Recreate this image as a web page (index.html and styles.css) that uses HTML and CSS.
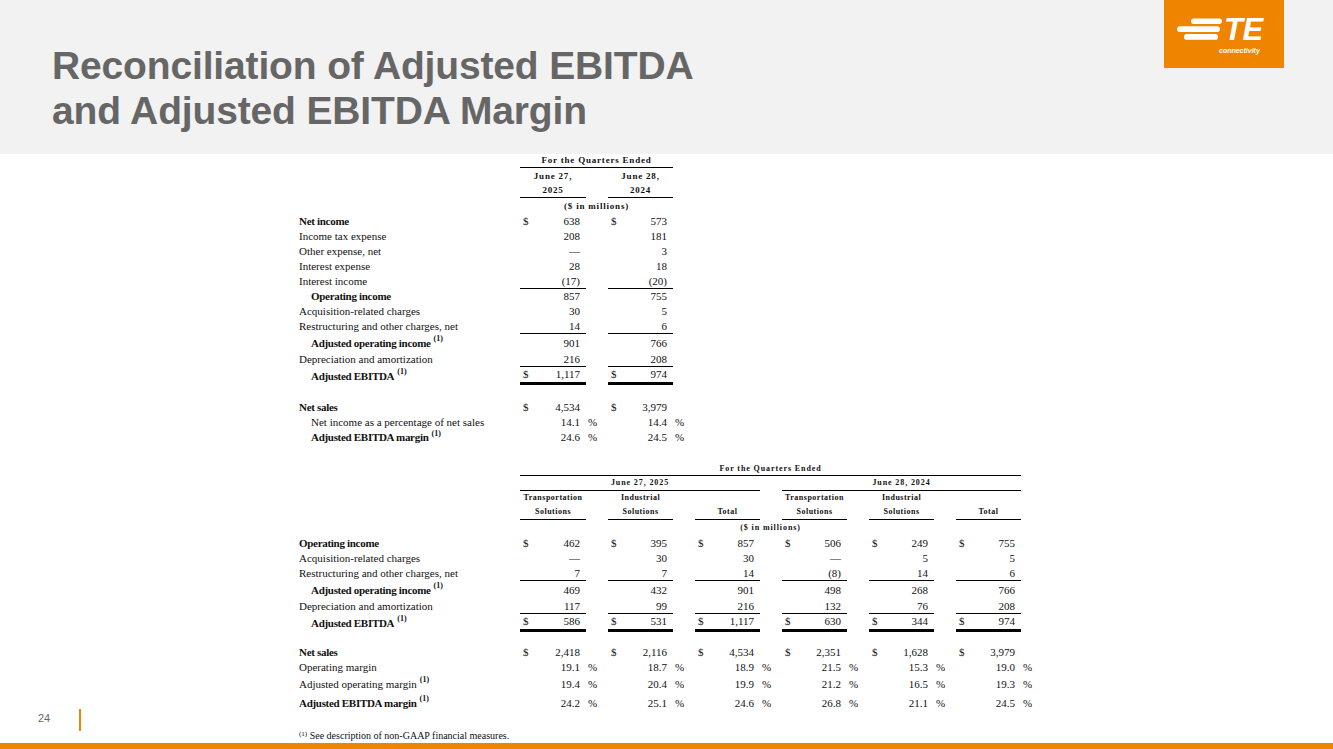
FILE: index.html
```html
<!DOCTYPE html>
<html lang="en">
<head>
<meta charset="utf-8">
<title>Reconciliation of Adjusted EBITDA and Adjusted EBITDA Margin</title>
<link rel="stylesheet" href="styles.css">
</head>
<body>
<div class="slide">
  <header class="top">
    <h1 class="title">Reconciliation of Adjusted EBITDA<br>and Adjusted EBITDA Margin</h1>
    <div class="logo">
      <svg width="120" height="68" viewBox="0 0 120 68" xmlns="http://www.w3.org/2000/svg">
        <rect width="120" height="68" fill="#ef8400"/>
        <rect x="27" y="18.5" width="31" height="5.4" rx="2.7" fill="#fff"/>
        <rect x="13" y="26.2" width="43" height="5.8" rx="2.9" fill="#fff"/>
        <rect x="20" y="34" width="34" height="5.8" rx="2.9" fill="#fff"/>
        <text x="60" y="40" font-family="Liberation Sans, Arial, sans-serif" font-weight="bold" font-style="italic" font-size="31" letter-spacing="-0.5" fill="#fff">TE</text>
        <text x="55" y="53" font-family="Liberation Sans, Arial, sans-serif" font-weight="bold" font-style="italic" font-size="7" fill="#fff">connectivity</text>
      </svg>
    </div>
  </header>

  <main class="body">
    <aside class="side">
      <div class="pagenum"><span>24</span><i class="pipe"></i></div>
    </aside>

    <section class="content">
      <!-- Table 1 -->
      <div class="tbl t1">
        <div class="row h14"><div class="hd u span1">For the Quarters Ended</div></div>
        <div class="row h16"><div class="hd c2">June 27,</div><div class="hd c4">June 28,</div></div>
        <div class="row h14"><div class="hd u c2">2025</div><div class="hd u c4">2024</div></div>
        <div class="row h16"><div class="hd span1">($ in millions)</div></div>

        <div class="row"><div class="lbl b">Net income</div><div class="m"><span>$</span><span>638</span></div><div></div><div class="m"><span>$</span><span>573</span></div><div></div></div>
        <div class="row"><div class="lbl">Income tax expense</div><div class="m"><span>208</span></div><div></div><div class="m"><span>181</span></div><div></div></div>
        <div class="row"><div class="lbl">Other expense, net</div><div class="m"><span>—</span></div><div></div><div class="m"><span>3</span></div><div></div></div>
        <div class="row"><div class="lbl">Interest expense</div><div class="m"><span>28</span></div><div></div><div class="m"><span>18</span></div><div></div></div>
        <div class="row"><div class="lbl">Interest income</div><div class="m u"><span>(17)</span></div><div></div><div class="m u"><span>(20)</span></div><div></div></div>
        <div class="row"><div class="lbl b in">Operating income</div><div class="m"><span>857</span></div><div></div><div class="m"><span>755</span></div><div></div></div>
        <div class="row"><div class="lbl">Acquisition-related charges</div><div class="m"><span>30</span></div><div></div><div class="m"><span>5</span></div><div></div></div>
        <div class="row"><div class="lbl">Restructuring and other charges, net</div><div class="m u"><span>14</span></div><div></div><div class="m u"><span>6</span></div><div></div></div>
        <div class="row h18"><div class="lbl b in">Adjusted operating income<sup class="fn">(1)</sup></div><div class="m"><span>901</span></div><div></div><div class="m"><span>766</span></div><div></div></div>
        <div class="row"><div class="lbl">Depreciation and amortization</div><div class="m u"><span>216</span></div><div></div><div class="m u"><span>208</span></div><div></div></div>
        <div class="row h18"><div class="lbl b in">Adjusted EBITDA<sup class="fn">(1)</sup></div><div class="m uu"><span>$</span><span>1,117</span></div><div></div><div class="m uu"><span>$</span><span>974</span></div><div></div></div>
        <div class="row h15 gapr"></div>
        <div class="row"><div class="lbl b">Net sales</div><div class="m"><span>$</span><span>4,534</span></div><div></div><div class="m"><span>$</span><span>3,979</span></div><div></div></div>
        <div class="row"><div class="lbl in">Net income as a percentage of net sales</div><div class="m"><span>14.1</span></div><div class="p">%</div><div class="m"><span>14.4</span></div><div class="p">%</div></div>
        <div class="row"><div class="lbl b in">Adjusted EBITDA margin<sup class="fn">(1)</sup></div><div class="m"><span>24.6</span></div><div class="p">%</div><div class="m"><span>24.5</span></div><div class="p">%</div></div>
      </div>

      <!-- Table 2 -->
      <div class="tbl t2">
        <div class="row h14"><div class="hd u all">For the Quarters Ended</div></div>
        <div class="row h15"><div class="hd u g1">June 27, 2025</div><div class="hd u g2">June 28, 2024</div></div>
        <div class="row h14"><div class="hd hs c2">Transportation</div><div class="hd hs c4">Industrial</div><div class="hd hs c8">Transportation</div><div class="hd hs c10">Industrial</div></div>
        <div class="row h15"><div class="hd hs u c2">Solutions</div><div class="hd hs u c4">Solutions</div><div class="hd hs u c6">Total</div><div class="hd hs u c8">Solutions</div><div class="hd hs u c10">Solutions</div><div class="hd hs u c12">Total</div></div>
        <div class="row h16"><div class="hd all">($ in millions)</div></div>

        <div class="row"><div class="lbl b">Operating income</div>
          <div class="m"><span>$</span><span>462</span></div><div></div>
          <div class="m"><span>$</span><span>395</span></div><div></div>
          <div class="m"><span>$</span><span>857</span></div><div></div>
          <div class="m"><span>$</span><span>506</span></div><div></div>
          <div class="m"><span>$</span><span>249</span></div><div></div>
          <div class="m"><span>$</span><span>755</span></div><div></div>
        </div>
        <div class="row"><div class="lbl">Acquisition-related charges</div>
          <div class="m"><span>—</span></div><div></div>
          <div class="m"><span>30</span></div><div></div>
          <div class="m"><span>30</span></div><div></div>
          <div class="m"><span>—</span></div><div></div>
          <div class="m"><span>5</span></div><div></div>
          <div class="m"><span>5</span></div><div></div>
        </div>
        <div class="row"><div class="lbl">Restructuring and other charges, net</div>
          <div class="m u"><span>7</span></div><div></div>
          <div class="m u"><span>7</span></div><div></div>
          <div class="m u"><span>14</span></div><div></div>
          <div class="m u"><span>(8)</span></div><div></div>
          <div class="m u"><span>14</span></div><div></div>
          <div class="m u"><span>6</span></div><div></div>
        </div>
        <div class="row h18"><div class="lbl b in">Adjusted operating income<sup class="fn">(1)</sup></div>
          <div class="m"><span>469</span></div><div></div>
          <div class="m"><span>432</span></div><div></div>
          <div class="m"><span>901</span></div><div></div>
          <div class="m"><span>498</span></div><div></div>
          <div class="m"><span>268</span></div><div></div>
          <div class="m"><span>766</span></div><div></div>
        </div>
        <div class="row"><div class="lbl">Depreciation and amortization</div>
          <div class="m u"><span>117</span></div><div></div>
          <div class="m u"><span>99</span></div><div></div>
          <div class="m u"><span>216</span></div><div></div>
          <div class="m u"><span>132</span></div><div></div>
          <div class="m u"><span>76</span></div><div></div>
          <div class="m u"><span>208</span></div><div></div>
        </div>
        <div class="row h18"><div class="lbl b in">Adjusted EBITDA<sup class="fn">(1)</sup></div>
          <div class="m uu"><span>$</span><span>586</span></div><div></div>
          <div class="m uu"><span>$</span><span>531</span></div><div></div>
          <div class="m uu"><span>$</span><span>1,117</span></div><div></div>
          <div class="m uu"><span>$</span><span>630</span></div><div></div>
          <div class="m uu"><span>$</span><span>344</span></div><div></div>
          <div class="m uu"><span>$</span><span>974</span></div><div></div>
        </div>
        <div class="row h13 gapr"></div>
        <div class="row"><div class="lbl b">Net sales</div>
          <div class="m"><span>$</span><span>2,418</span></div><div></div>
          <div class="m"><span>$</span><span>2,116</span></div><div></div>
          <div class="m"><span>$</span><span>4,534</span></div><div></div>
          <div class="m"><span>$</span><span>2,351</span></div><div></div>
          <div class="m"><span>$</span><span>1,628</span></div><div></div>
          <div class="m"><span>$</span><span>3,979</span></div><div></div>
        </div>
        <div class="row"><div class="lbl">Operating margin</div>
          <div class="m"><span>19.1</span></div><div class="p">%</div>
          <div class="m"><span>18.7</span></div><div class="p">%</div>
          <div class="m"><span>18.9</span></div><div class="p">%</div>
          <div class="m"><span>21.5</span></div><div class="p">%</div>
          <div class="m"><span>15.3</span></div><div class="p">%</div>
          <div class="m"><span>19.0</span></div><div class="p">%</div>
        </div>
        <div class="row h18"><div class="lbl">Adjusted operating margin<sup class="fn">(1)</sup></div>
          <div class="m"><span>19.4</span></div><div class="p">%</div>
          <div class="m"><span>20.4</span></div><div class="p">%</div>
          <div class="m"><span>19.9</span></div><div class="p">%</div>
          <div class="m"><span>21.2</span></div><div class="p">%</div>
          <div class="m"><span>16.5</span></div><div class="p">%</div>
          <div class="m"><span>19.3</span></div><div class="p">%</div>
        </div>
        <div class="row h20"><div class="lbl b">Adjusted EBITDA margin<sup class="fn">(1)</sup></div>
          <div class="m"><span>24.2</span></div><div class="p">%</div>
          <div class="m"><span>25.1</span></div><div class="p">%</div>
          <div class="m"><span>24.6</span></div><div class="p">%</div>
          <div class="m"><span>26.8</span></div><div class="p">%</div>
          <div class="m"><span>21.1</span></div><div class="p">%</div>
          <div class="m"><span>24.5</span></div><div class="p">%</div>
        </div>
      </div>

      <p class="note"><sup class="nfn">(1)</sup> See description of non-GAAP financial measures.</p>
    </section>
  </main>

  <div class="bar"></div>
</div>
</body>
</html>
```

FILE: styles.css
```css
* {
  box-sizing: border-box;
  margin: 0;
  padding: 0;
}

html, body {
  margin: 0;
  width: 1333px;
  height: 749px;
  overflow: hidden;
  background: #ffffff;
}

.slide {
  width: 1333px;
  height: 749px;
  display: flex;
  flex-direction: column;
}

/* ---------- Header ---------- */
.top {
  flex: none;
  height: 154px;
  background: #f2f2f2;
  display: flex;
  justify-content: space-between;
  align-items: flex-start;
}

.title {
  padding: 43px 0 0 52px;
  font-family: "Liberation Sans", Arial, sans-serif;
  font-weight: bold;
  font-size: 39px;
  line-height: 45px;
  letter-spacing: -0.15px;
  color: #666666;
}

.logo {
  margin-right: 49px;
  width: 120px;
  height: 68px;
}

.logo svg {
  display: block;
}

/* ---------- Body ---------- */
.body {
  flex: 1;
  display: grid;
  grid-template-columns: 299px 1fr;
  min-height: 0;
}

.side {
  display: flex;
  flex-direction: column;
  justify-content: flex-end;
  padding-bottom: 12px;
}

.pagenum {
  display: flex;
  align-items: center;
  height: 22px;
  padding-left: 38px;
  font-family: "Liberation Sans", Arial, sans-serif;
  font-size: 11px;
  color: #666666;
}

.pagenum span {
  position: relative;
  top: -2px;
}

.pipe {
  display: block;
  width: 2px;
  height: 22px;
  margin-left: 29px;
  background: #ef8400;
}

.content {
  font-family: "Liberation Serif", "Times New Roman", serif;
  font-size: 11px;
  color: #111111;
}

/* ---------- Tables ---------- */
.tbl {
  display: flex;
  flex-direction: column;
}

.t1 .row {
  grid-template-columns: 221px 66px 22px 65px 20px;
}

.t2 {
  margin-top: 17px;
}

.t2 .row {
  grid-template-columns: 221px 66px 22px 65px 22px 65px 22px 65px 22px 65px 22px 65px 20px;
}

.row {
  display: grid;
  height: 15px;
  line-height: 1;
  align-items: stretch;
}

.row > * {
  display: flex;
  align-items: center;
  white-space: nowrap;
}

.h13 { height: 13px; }
.h14 { height: 14px; }
.h15 { height: 15px; }
.h16 { height: 16px; }
.h18 { height: 18px; }
.h20 { height: 20px; }

.lbl {
  padding-left: 0;
}

.lbl.in {
  padding-left: 12px;
}

.b {
  font-weight: bold;
  letter-spacing: -0.3px;
}

.fn {
  font-size: 8px;
  font-weight: bold;
  letter-spacing: 0;
  margin-left: 3px;
  position: relative;
  top: -4px;
  vertical-align: baseline;
}

.m {
  justify-content: space-between;
  padding: 0 6px 0 3px;
}

.m span:last-child {
  margin-left: auto;
}

.m span:first-child:not(:last-child) {
  margin-left: 0;
}

.p {
  padding-left: 2px;
}

.u {
  border-bottom: 1px solid #000000;
}

.uu {
  border-bottom: 3px solid #000000;
}

.hd {
  justify-content: center;
  font-weight: bold;
  font-size: 9px;
  letter-spacing: 0.8px;
  color: #111111;
}

.t2 .hd {
  font-size: 8px;
  letter-spacing: 0.9px;
}

.t2 .hd.hs {
  letter-spacing: 0.5px;
}

.t1 .span1 { grid-column: 2 / 5; }
.t2 .all { grid-column: 2 / 13; }
.t2 .g1 { grid-column: 2 / 7; }
.t2 .g2 { grid-column: 8 / 13; }

.c2 { grid-column: 2 / 3; }
.c4 { grid-column: 4 / 5; }
.c6 { grid-column: 6 / 7; }
.c8 { grid-column: 8 / 9; }
.c10 { grid-column: 10 / 11; }
.c12 { grid-column: 12 / 13; }

.note {
  margin-top: 17px;
  height: 12px;
  line-height: 12px;
  font-size: 10px;
  color: #111111;
}

.nfn {
  font-size: 7px;
  position: relative;
  top: -3px;
  vertical-align: baseline;
}

/* ---------- Bottom bar ---------- */
.bar {
  flex: none;
  height: 6px;
  background: #ef8400;
}
```
